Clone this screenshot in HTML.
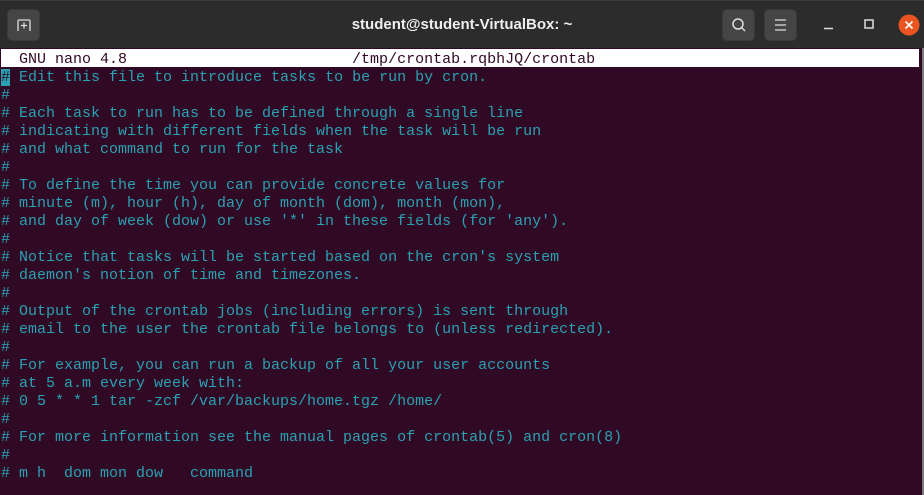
<!DOCTYPE html>
<html><head><meta charset="utf-8"><style>
html,body{margin:0;padding:0;width:924px;height:495px;overflow:hidden;background:#300a24;font-family:"Liberation Sans",sans-serif}
.tb{position:absolute;left:0;top:0;width:924px;height:48px;background:#2c2c2c;border-top:1px solid #3a3a3a;box-sizing:border-box}
.btn{position:absolute;top:8px;width:33px;height:32px;background:#454545;border-radius:5px;border:1px solid #3a3a3a;box-sizing:border-box}
.title{position:absolute;left:0;width:924px;top:15px;text-align:center;color:#eee;font-weight:bold;font-size:15px}
.term{position:absolute;left:1px;top:51px;font-family:"Liberation Mono",monospace;font-size:15px;line-height:18px;color:#2aa1b3;white-space:pre}
.hdr{position:absolute;left:1px;top:49px;width:918px;height:18px;background:#fff}
.cur{background:#2aa1b3;color:#300a24}
.sb{position:absolute;left:922px;top:48px;width:2px;height:447px;background:#7a7a7a}
</style></head><body>
<div class="tb">
 <div class="btn" style="left:7px"><svg width="33" height="32" viewBox="0 0 33 32" style="position:absolute;left:-1px;top:-1px"><path d="M11 22V12a1 1 0 0 1 1-1h10a1 1 0 0 1 1 1v10" fill="none" stroke="#ddd" stroke-width="1.3"/><path d="M17 13.5v6M14 16.5h6" stroke="#ddd" stroke-width="1.3"/></svg></div>
 <div class="title">student@student-VirtualBox: ~</div>
 <div class="btn" style="left:722px"><svg width="33" height="32" style="position:absolute;left:-1px;top:-1px"><circle cx="16" cy="15" r="5" fill="none" stroke="#ddd" stroke-width="1.5"/><path d="M19.5 18.5l3.5 3.5" stroke="#ddd" stroke-width="1.5"/></svg></div>
 <div class="btn" style="left:764px"><svg width="33" height="32" style="position:absolute;left:-1px;top:-1px"><path d="M11 11h11M11 16h11M11 21h11" stroke="#ddd" stroke-width="1.3"/></svg></div>
 <svg width="12" height="12" style="position:absolute;left:823px;top:20px"><path d="M1 7.5h9" stroke="#ddd" stroke-width="1.5"/></svg>
 <svg width="12" height="12" style="position:absolute;left:864px;top:18px"><rect x="1" y="1" width="8" height="8" fill="none" stroke="#ddd" stroke-width="1.5"/></svg>
 <svg width="22" height="22" style="position:absolute;left:898px;top:13px"><circle cx="11" cy="11" r="10.5" fill="#e95420"/><path d="M7.5 7.5l7 7M14.5 7.5l-7 7" stroke="#fff" stroke-width="1.6"/></svg>
</div>
<div class="hdr"></div>
<div class="sb"></div>
<div class="term"><span style="color:#300a24">  GNU nano 4.8                         /tmp/crontab.rqbhJQ/crontab</span>
<span class="cur">#</span> Edit this file to introduce tasks to be run by cron.
#
# Each task to run has to be defined through a single line
# indicating with different fields when the task will be run
# and what command to run for the task
#
# To define the time you can provide concrete values for
# minute (m), hour (h), day of month (dom), month (mon),
# and day of week (dow) or use '*' in these fields (for 'any').
#
# Notice that tasks will be started based on the cron's system
# daemon's notion of time and timezones.
#
# Output of the crontab jobs (including errors) is sent through
# email to the user the crontab file belongs to (unless redirected).
#
# For example, you can run a backup of all your user accounts
# at 5 a.m every week with:
# 0 5 * * 1 tar -zcf /var/backups/home.tgz /home/
#
# For more information see the manual pages of crontab(5) and cron(8)
#
# m h  dom mon dow   command</div>
</body></html>
